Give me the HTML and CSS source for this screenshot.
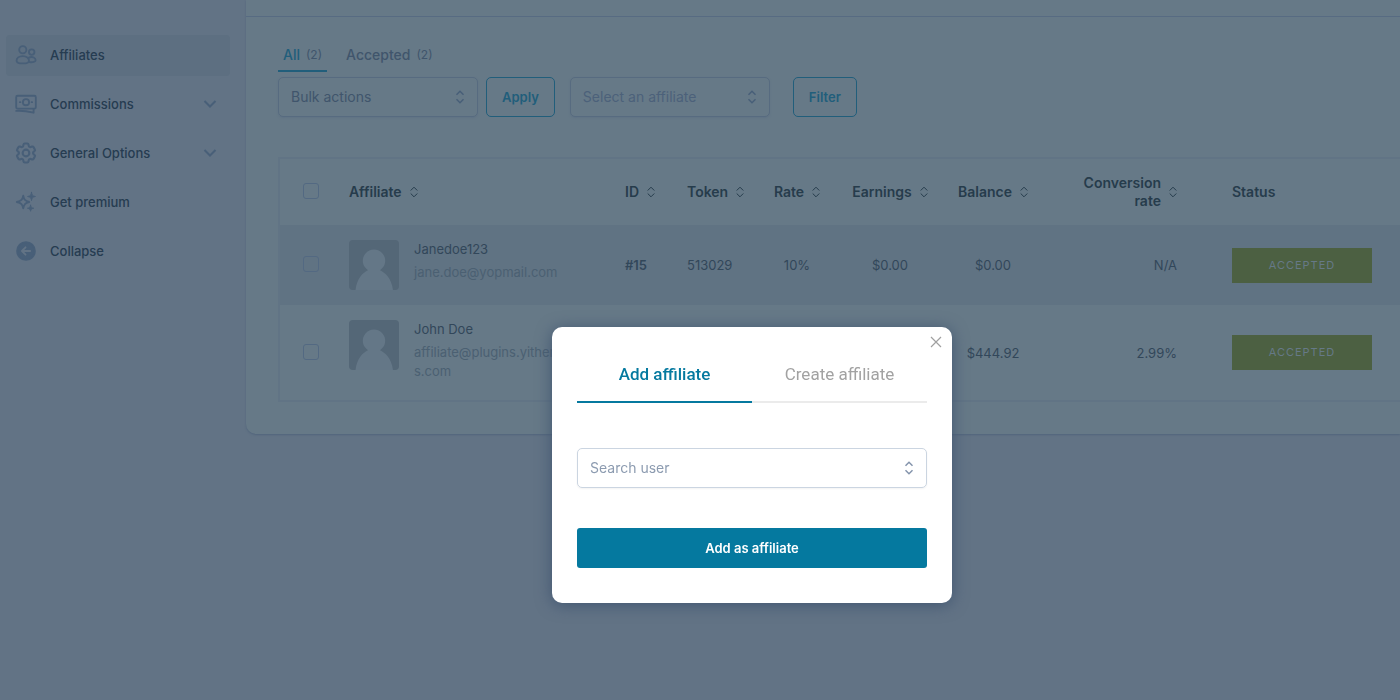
FILE: index.html
```html
<!DOCTYPE html>
<html lang="en">
<head>
<meta charset="utf-8">
<title>Affiliates</title>
<link rel="stylesheet" href="styles.css">
</head>
<body>
<svg class="symbols" aria-hidden="true">
  <symbol id="sort" viewBox="0 0 8 12"><path d="M0.7 4.500 4 1.200l3.300 3.300M0.7 7.500 4 10.800l3.300-3.300" fill="none" stroke="currentColor"/></symbol>
  <symbol id="updown" viewBox="0 0 10 14"><path d="M1.500 4.700 5 1.300l3.500 3.400M1.500 9.300 5 12.700l3.500-3.400" fill="none" stroke="currentColor" stroke-width="1.500"/></symbol>
  <symbol id="chevron" viewBox="0 0 14 10"><path d="M1.500 2 7 7.500 12.500 2" fill="none" stroke="currentColor" stroke-width="2"/></symbol>
  <symbol id="avatar" viewBox="0 0 50 50"><path class="avatar-bg" d="M0 0h50v50H0z"/><path class="avatar-fg" d="M6.500 50C8 38 14 32.500 19 30.200a11.200 11.200 0 1 1 12 0C36 32.500 42.500 38 44 50z"/></symbol>
</svg>
<div class="app">
  <nav class="sidebar">
    <a class="nav-item active" href="#">
      <svg class="nav-icon" viewBox="0 0 24 24"><circle cx="8.500" cy="6.300" r="3.900"/><circle cx="18.200" cy="8.800" r="3"/><path d="M8.500 13.200c-4.300 0-6.800 2.300-6.800 5 0 1.800 2.500 3 6.800 3s6.800-1.200 6.800-3c0-2.700-2.500-5-6.800-5zM15 14.800c4.500-1.800 7.500.8 7.500 2.900 0 1.700-3 2.600-6.800 2"/></svg>
      <span>Affiliates</span>
    </a>
    <a class="nav-item" href="#">
      <svg class="nav-icon" viewBox="0 0 24 24"><rect x="1.300" y="3" width="21.400" height="14" rx="1.500"/><circle cx="12" cy="10" r="3.400"/><path d="M5.300 10h.6M18.100 10h.6M1.300 19.500c7-.5 12 .3 19 2V17.500"/></svg>
      <span>Commissions</span>
      <svg class="nav-chevron"><use href="#chevron"/></svg>
    </a>
    <a class="nav-item" href="#">
      <svg class="nav-icon" viewBox="1.500 1.500 21 21"><path d="M9.594 3.940c.09-.542.56-.94 1.110-.94h2.593c.55 0 1.020.398 1.110.94l.213 1.281c.063.374.313.686.645.87.074.04.147.083.22.127.325.196.72.257 1.075.124l1.217-.456a1.125 1.125 0 0 1 1.370.49l1.296 2.247a1.125 1.125 0 0 1-.26 1.431l-1.003.827c-.293.241-.438.613-.43.992a7.723 7.723 0 0 1 0 .255c-.008.378.137.75.43.991l1.004.827c.424.35.534.955.26 1.430l-1.298 2.247a1.125 1.125 0 0 1-1.369.491l-1.217-.456c-.355-.133-.75-.072-1.076.124a6.470 6.470 0 0 1-.22.128c-.331.183-.581.495-.644.869l-.213 1.281c-.09.543-.56.94-1.110.94h-2.594c-.55 0-1.019-.398-1.110-.94l-.213-1.281c-.062-.374-.312-.686-.644-.87a6.520 6.520 0 0 1-.22-.127c-.325-.196-.72-.257-1.076-.124l-1.217.456a1.125 1.125 0 0 1-1.369-.49l-1.297-2.247a1.125 1.125 0 0 1 .26-1.431l1.004-.827c.292-.24.437-.613.43-.991a6.932 6.932 0 0 1 0-.255c.007-.38-.138-.751-.43-.992l-1.004-.827a1.125 1.125 0 0 1-.26-1.430l1.297-2.247a1.125 1.125 0 0 1 1.370-.491l1.216.456c.356.133.751.072 1.076-.124.072-.044.146-.086.22-.128.332-.183.582-.495.644-.869z"/><circle cx="12" cy="12" r="3.200"/></svg>
      <span>General Options</span>
      <svg class="nav-chevron"><use href="#chevron"/></svg>
    </a>
    <a class="nav-item" href="#">
      <svg class="nav-icon" viewBox="0 0 24 24"><path d="M9 5c.8 4.500 2 5.800 6.500 7C11 13.200 9.800 14.500 9 19c-.8-4.500-2-5.800-7-7 5-1.200 6.200-2.500 7-7z"/><path class="solid-star" d="M18 1.500c.4 2.900 1 3.900 4.300 4.500-3.300.6-3.900 1.600-4.300 4.500-.4-2.900-1-3.900-4.300-4.500 3.300-.6 3.900-1.600 4.300-4.500zM17 15.500c.4 2.200 1 2.800 3.500 3.300-2.500.5-3.100 1.200-3.500 3.300-.4-2.200-1-2.800-3.500-3.300 2.500-.5 3.100-1.200 3.500-3.300z"/></svg>
      <span>Get premium</span>
    </a>
    <a class="nav-item" href="#">
      <svg class="nav-icon" viewBox="0 0 24 24"><circle class="solid" cx="12" cy="12" r="9.700"/><path class="cutout" d="M16.500 12h-9M11.500 8l-4 4 4 4"/></svg>
      <span>Collapse</span>
    </a>
  </nav>
  <main class="panel">
    <div class="panel-top"></div>
    <div class="content">
      <div class="views">
        <a class="view current" href="#">All <span class="count">(2)</span></a>
        <a class="view" href="#">Accepted <span class="count">(2)</span></a>
      </div>
      <div class="filters">
        <div class="select-wrap"><select class="select" aria-label="Bulk actions"><option>Bulk actions</option></select><svg class="select-icon"><use href="#updown"/></svg></div>
        <button class="button apply" type="button">Apply</button>
        <div class="select-wrap affiliate-select"><select class="select muted" aria-label="Select an affiliate"><option>Select an affiliate</option></select><svg class="select-icon"><use href="#updown"/></svg></div>
        <button class="button" type="button">Filter</button>
      </div>
      <table class="table">
        <colgroup><col class="c-check"><col class="c-name"><col class="c-id"><col class="c-token"><col class="c-rate"><col class="c-earn"><col class="c-bal"><col class="c-conv"><col class="c-status"></colgroup>
        <thead>
          <tr>
            <th class="check"><input type="checkbox" aria-label="Select all"></th>
            <th><span class="head">Affiliate <svg class="sort"><use href="#sort"/></svg></span></th>
            <th><span class="head">ID <svg class="sort"><use href="#sort"/></svg></span></th>
            <th><span class="head">Token <svg class="sort"><use href="#sort"/></svg></span></th>
            <th class="center"><span class="head">Rate <svg class="sort"><use href="#sort"/></svg></span></th>
            <th class="center"><span class="head">Earnings <svg class="sort"><use href="#sort"/></svg></span></th>
            <th class="center"><span class="head">Balance <svg class="sort"><use href="#sort"/></svg></span></th>
            <th class="right"><span class="head">Conversion<br>rate <svg class="sort"><use href="#sort"/></svg></span></th>
            <th class="status">Status</th>
          </tr>
        </thead>
        <tbody>
          <tr class="odd">
            <td class="check"><input type="checkbox" aria-label="Select Janedoe123"></td>
            <td class="who"><div class="person"><svg class="avatar"><use href="#avatar"/></svg><div class="person-text"><a class="name" href="#">Janedoe123</a><span class="email">jane.doe@yopmail.com</span></div></div></td>
            <td class="id">#15</td>
            <td>513029</td>
            <td class="center">10%</td>
            <td class="center">$0.00</td>
            <td class="center">$0.00</td>
            <td class="right">N/A</td>
            <td class="status"><span class="badge">ACCEPTED</span></td>
          </tr>
          <tr class="even">
            <td class="check"><input type="checkbox" aria-label="Select John Doe"></td>
            <td class="who"><div class="person"><svg class="avatar"><use href="#avatar"/></svg><div class="person-text"><a class="name" href="#">John Doe</a><span class="email">affiliate@plugins.yithemes.com</span></div></div></td>
            <td></td>
            <td></td>
            <td></td>
            <td></td>
            <td class="center">$444.92</td>
            <td class="right">2.99%</td>
            <td class="status"><span class="badge">ACCEPTED</span></td>
          </tr>
        </tbody>
      </table>
    </div>
  </main>
</div>
<dialog class="modal" open aria-label="Add affiliate">
  <button class="close" type="button" aria-label="Close"><svg viewBox="0 0 12 12"><path d="M1 1l10 10M11 1 1 11"/></svg></button>
  <div class="tabs" role="tablist">
    <button class="tab selected" type="button" role="tab" aria-selected="true">Add affiliate</button>
    <button class="tab" type="button" role="tab" aria-selected="false">Create affiliate</button>
  </div>
  <div class="select-wrap search"><select class="select" aria-label="Search user"><option>Search user</option></select><svg class="select-icon"><use href="#updown"/></svg></div>
  <button class="submit" type="button">Add as affiliate</button>
</dialog>
</body>
</html>
```
FILE: styles.css
```css
* {
  box-sizing: border-box;
}

body {
  margin: 0;
  min-height: 100vh;
  background: #627385;
  color: #32475a;
  font-family: Inter, "Liberation Sans", sans-serif;
  font-size: 13px;
}

a {
  color: inherit;
  text-decoration: none;
}

button,
select {
  font-family: inherit;
}

.symbols {
  position: absolute;
  width: 0;
  height: 0;
}

.app {
  display: flex;
  align-items: flex-start;
  overflow: hidden;
  padding-bottom: 8px;
}

.sidebar {
  display: flex;
  flex: 0 0 246px;
  flex-direction: column;
  gap: 8px;
  padding: 35px 16px 0 6px;
}

.nav-item {
  display: flex;
  align-items: center;
  gap: 13px;
  height: 41px;
  padding: 0 13px 2px 9px;
  border-radius: 4px;
  color: #263c51;
  font-weight: 500;
}

.nav-item.active {
  background: #5d6f81;
}

.nav-icon {
  width: 22px;
  height: 22px;
  fill: none;
  stroke: #485f78;
  stroke-width: 2;
  stroke-linecap: round;
  stroke-linejoin: round;
}

.nav-icon .solid,
.nav-icon .solid-star {
  fill: #485f78;
}

.nav-icon .solid-star {
  stroke-width: 1;
}

.nav-icon .cutout {
  stroke: #627385;
}

.nav-chevron {
  width: 14px;
  height: 10px;
  margin-left: auto;
  color: #485f78;
}

.panel {
  flex: 1;
  min-width: 0;
  border-radius: 0 0 0 10px;
  background: #667987;
  box-shadow: 0 1px 2px #51657c;
}

.panel-top {
  height: 17px;
  border-bottom: 1px solid #576b82;
}

.content {
  padding: 21px 0 32px 32px;
}

.views {
  display: flex;
  gap: 14px;
}

.view {
  display: flex;
  align-items: center;
  gap: 6px;
  height: 34px;
  padding: 0 5px;
  border-bottom: 2px solid transparent;
  color: #40556c;
  font-size: 14px;
  font-weight: 500;
}

.view.current {
  border-color: #215e7b;
  color: #215e7b;
}

.count {
  color: #40556c;
  font-size: 12px;
  font-weight: 400;
}

.filters {
  display: flex;
  align-items: center;
  margin-top: 5px;
}

.select-wrap {
  display: grid;
  align-items: center;
  width: 200px;
}

.select,
.select-icon {
  grid-area: 1 / 1;
}

.select {
  width: 100%;
  height: 40px;
  padding: 0 12px 2px;
  border: 1px solid #576b80;
  border-radius: 5px;
  appearance: none;
  background: transparent;
  box-shadow: 0 1px 2px #5f7285;
  color: #40556c;
  font-size: 14px;
}

.select.muted {
  color: #4c617a;
}

.select-icon {
  justify-self: end;
  width: 10px;
  height: 14px;
  margin-right: 13px;
  color: #485f78;
  pointer-events: none;
}

.button {
  height: 40px;
  padding: 0 15px;
  border: 1px solid #215e7b;
  border-radius: 5px;
  background: transparent;
  color: #215e7b;
  font-size: 13px;
  font-weight: 600;
}

.apply {
  margin-left: 8px;
}

.affiliate-select {
  margin: 0 23px 0 15px;
}

.table {
  width: calc(100% + 2px);
  margin-top: 40px;
  border: 2px solid #617485;
  border-collapse: separate;
  border-spacing: 0;
  table-layout: fixed;
  color: #32475a;
}

.c-check { width: 69px; }
.c-name { width: 276px; }
.c-id { width: 62px; }
.c-token { width: 75px; }
.c-rate { width: 70px; }
.c-earn { width: 116px; }
.c-bal { width: 90px; }
.c-conv { width: 155px; }

th,
td {
  padding: 0;
  text-align: left;
}

th {
  height: 66px;
  color: #263c4c;
  font-size: 14px;
  font-weight: 600;
  line-height: 18px;
}

.head {
  display: inline-flex;
  align-items: center;
  gap: 8px;
}

.sort {
  flex: none;
  width: 8px;
  height: 12px;
}

.check {
  padding-left: 23px;
}

.check input {
  display: block;
  width: 16px;
  height: 16px;
  margin: 0 0 2px;
  border: 1px solid #536982;
  border-radius: 3px;
  appearance: none;
}

.center {
  text-align: center;
}

.right {
  padding-right: 16px;
  text-align: right;
}

.status {
  padding-left: 39px;
}

.odd td {
  height: 80px;
  background: #607383;
}

.even td {
  height: 95px;
}

td.who {
  padding-top: 15px;
  vertical-align: top;
}

.id {
  font-weight: 600;
}

.person {
  display: flex;
  align-items: flex-start;
  gap: 15px;
}

.avatar {
  flex: none;
  width: 50px;
  height: 50px;
  border-radius: 4px;
}

.avatar-bg {
  fill: #546777;
}

.avatar-fg {
  fill: #647787;
}

.person-text {
  display: flex;
  flex-direction: column;
  gap: 4px;
  width: 160px;
  line-height: 19px;
}

.email {
  color: #4b6072;
  overflow-wrap: anywhere;
}

.badge {
  display: block;
  width: 140px;
  background: #4c6042;
  color: #667987;
  font-size: 11px;
  letter-spacing: 1px;
  line-height: 35px;
  text-align: center;
}

.modal {
  position: fixed;
  top: 327px;
  left: calc(50% + 52px);
  width: 400px;
  margin: 0;
  padding: 19px 25px 35px;
  border: 0;
  border-radius: 10px;
  background: #fff;
  box-shadow: 0 2px 16px #405570;
  transform: translateX(-50%);
}

.close {
  position: absolute;
  top: 5px;
  right: 6px;
  display: flex;
  padding: 4px;
  border: 0;
  background: none;
}

.close svg {
  width: 12px;
  height: 12px;
  fill: none;
  stroke: #a0a0a0;
  stroke-width: 1.2;
}

.tabs {
  display: flex;
}

.tab {
  flex: 1;
  height: 57px;
  padding: 0;
  border: 0;
  border-bottom: 2px solid #ebebeb;
  background: none;
  color: #a2a2a2;
  font-family: Roboto, sans-serif;
  font-size: 17px;
  font-weight: 400;
}

.tab.selected {
  border-color: #05799f;
  color: #05799f;
  font-weight: 500;
}

.search {
  width: 100%;
  margin: 45px 0 40px;
}

.search .select {
  border-color: #cbd5e1;
  box-shadow: 0 1px 2px #0000000d;
  color: #8c9bb0;
}

.search .select-icon {
  color: #8494ac;
}

.submit {
  display: block;
  width: 100%;
  height: 40px;
  border: 0;
  border-radius: 3px;
  background: #05799f;
  color: #fff;
  font-size: 13px;
  font-weight: 600;
}
```
